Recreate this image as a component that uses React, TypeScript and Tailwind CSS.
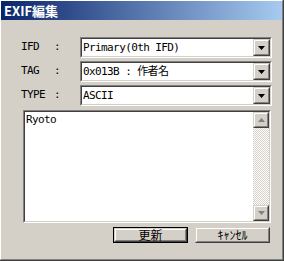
import type { ReactNode } from 'react';

const mono = "font-['DejaVu_Sans_Mono','Noto_Sans_CJK_JP',monospace] text-[11px] tracking-[-0.6px]";
const jp = "font-['Noto_Sans_CJK_JP','DejaVu_Sans',sans-serif]";

const Sunken = ({ className, children }: { className?: string; children: ReactNode }) => (
    <div className={`border-t border-l border-[#808080] border-r border-b border-r-white border-b-white ${className ?? ''}`}>
        <div className="h-full w-full border-t border-l border-[#404040] border-r border-b border-r-[#d4d0c8] border-b-[#d4d0c8] bg-white">
            {children}
        </div>
    </div>
);

const Raised = ({ className, children }: { className?: string; children?: ReactNode }) => (
    <div className={`border-r border-b border-[#404040] border-t border-l border-t-[#d4d0c8] border-l-[#d4d0c8] ${className ?? ''}`}>
        <div className="h-full w-full border-t border-l border-white border-r border-b border-r-[#808080] border-b-[#808080] bg-[#d4d0c8] flex items-center justify-center">
            {children}
        </div>
    </div>
);

const Arrow = ({ up, color = '#000' }: { up?: boolean; color?: string }) => (
    <svg width="7" height="4" viewBox="0 0 7 4">
        <path d={up ? 'M3.5 0L7 4H0z' : 'M0 0h7L3.5 4z'} fill={color} />
    </svg>
);

const Combo = ({ value }: { value: string }) => (
    <Sunken className="w-[192px] h-[21px]">
        <div className="flex h-full items-center">
            <div className={`flex-1 pl-[1px] text-black leading-none ${mono}`}>{value}</div>
            <Raised className="w-[17px] h-[17px]">
                <Arrow />
            </Raised>
        </div>
    </Sunken>
);

const Row = ({ label, value }: { label: string; value: string }) => (
    <div className="flex items-center h-[21px]">
        <div className={`w-[33px] text-black ${mono}`}>{label}</div>
        <div className={`w-[26px] text-black ${mono}`}>:</div>
        <Combo value={value} />
    </div>
);

export default function App() {
    return (
        <div className="w-[284px] h-[261px] border-r border-b border-[#404040] bg-[#d4d0c8]">
            <div className="h-full w-full border-t border-l border-white border-r border-b border-r-[#808080] border-b-[#808080] flex flex-col">
                {/* title bar */}
                <div className="h-[19px] flex items-center pl-[3px] bg-[linear-gradient(90deg,#0a246a,#a6caf0)]">
                    <span className={`text-white text-[13px] font-bold leading-none ${jp}`}>EXIF編集</span>
                </div>
                <div className="flex flex-col pt-[17px] pl-[20px] gap-[3px]">
                    <Row label="IFD" value="Primary(0th IFD)" />
                    <Row label="TAG" value="0x013B : 作者名" />
                    <Row label="TYPE" value="ASCII" />
                </div>
                <div className="pl-[22px] pt-[4px]">
                    <Sunken className="w-[248px] h-[113px]">
                        <div className="flex h-full">
                            <div className={`flex-1 pl-[1px] pt-[2px] text-black leading-none ${mono}`}>Ryoto</div>
                            <div className="w-[16px] h-full flex flex-col">
                                <Raised className="w-[16px] h-[16px]">
                                    <Arrow up color="#808080" />
                                </Raised>
                                <div className="flex-1 bg-[repeating-conic-gradient(#d4d0c8_0_25%,#ffffff_0_50%)] bg-[length:2px_2px]" />
                                <Raised className="w-[16px] h-[16px]">
                                    <Arrow color="#808080" />
                                </Raised>
                            </div>
                        </div>
                    </Sunken>
                </div>
                <div className="flex pl-[112px] pt-[4px] gap-[7px]">
                    <div className="w-[75px] h-[16px] border border-black">
                        <Raised className="h-full w-full">
                            <span className={`text-black text-[12px] leading-none ${jp}`}>更新</span>
                        </Raised>
                    </div>
                    <Raised className="w-[75px] h-[16px]">
                        <span className={`text-black text-[12px] leading-none ${jp}`}>ｷｬﾝｾﾙ</span>
                    </Raised>
                </div>
            </div>
        </div>
    );
}
